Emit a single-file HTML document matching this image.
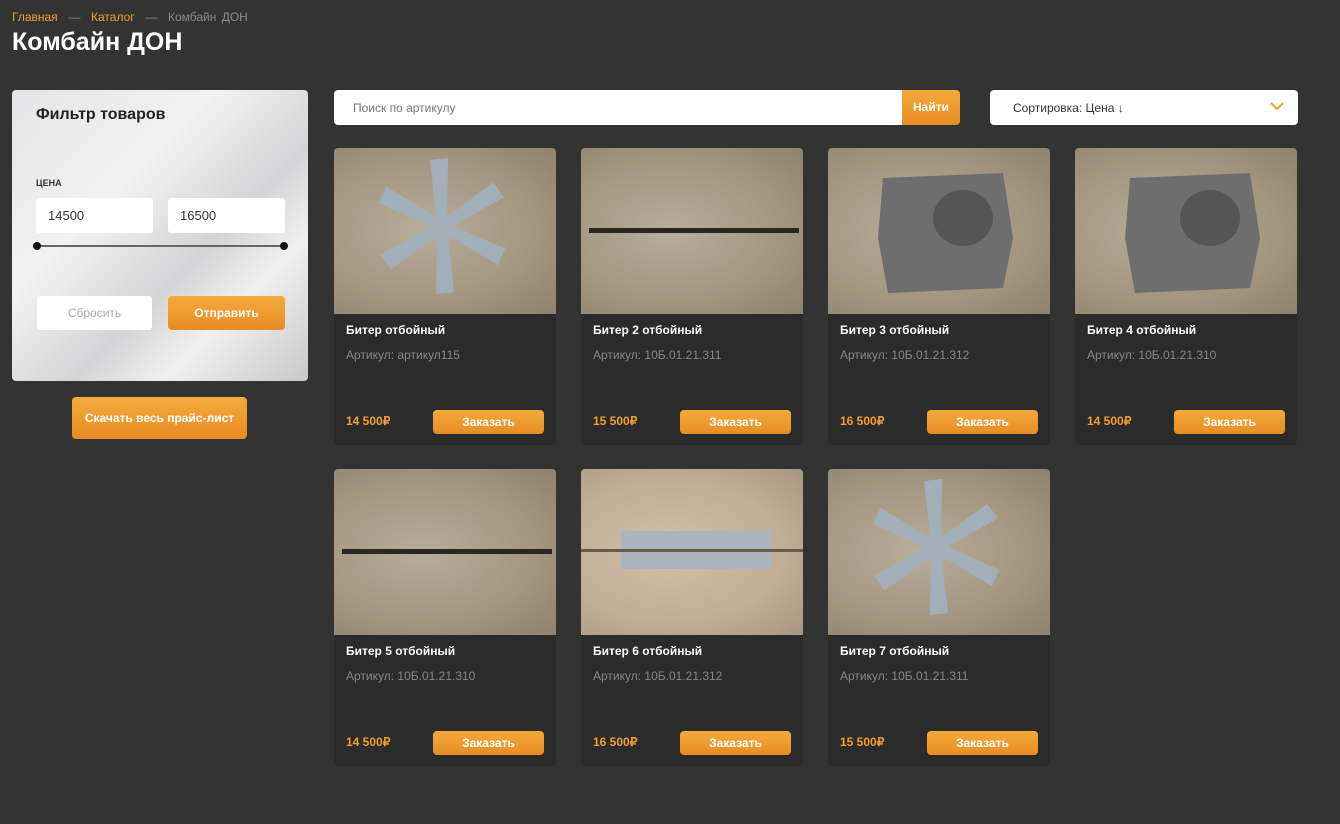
<!DOCTYPE html>
<html><head><meta charset="utf-8"><style>
*{box-sizing:border-box;margin:0;padding:0}
body{width:1340px;height:824px;background:#333333;font-family:"Liberation Sans",sans-serif;position:relative;overflow:hidden;color:#fff}
.a{position:absolute}
.bc{left:12px;top:10px;font-size:12px;color:#8a8a8a;word-spacing:2px}
.bc span{color:#f0a030}
h1{position:absolute;left:12px;top:28px;font-size:25px;font-weight:bold;color:#fff}
.filter{left:12px;top:90px;width:296px;height:291px;border-radius:4px;background:linear-gradient(135deg,#e4e4e6 0%,#f2f2f3 35%,#d4d4d6 60%,#f0f0f1 75%,#c8c8ca 100%)}
.inp{background:#fff;border-radius:3px;height:35px;font-size:13px;color:#333;padding:10px 12px}
.btn{background:linear-gradient(#f4aa3c,#e88c24);border-radius:4px;color:#fff;font-size:12px;font-weight:bold;text-align:center}
.card{width:222px;height:297px;background:#2b2b2b;border-radius:4px;overflow:hidden}
.img{height:166px;background:radial-gradient(ellipse at 40% 50%,#b8ad9c,#a2967f 60%,#8f826d)}
.img svg{display:block}
.t{position:absolute;left:12px;top:175px;font-size:12px;font-weight:bold}
.ar{position:absolute;left:12px;top:200px;font-size:12px;color:#888}
.pr{position:absolute;left:12px;top:266px;font-size:12px;font-weight:bold;color:#f0a030}
.ob{position:absolute;left:99px;top:262px;width:111px;height:24px;line-height:24px}
</style></head><body>
<div class="a bc"><span>Главная</span> &nbsp;— &nbsp;<span>Каталог</span> &nbsp;— &nbsp;Комбайн ДОН</div>
<h1>Комбайн ДОН</h1>
<div class="a filter">
<div class="a" style="left:24px;top:16px;font-size:16px;font-weight:bold;color:#222">Фильтр товаров</div>
<div class="a" style="left:24px;top:88px;font-size:9px;font-weight:bold;color:#333">ЦЕНА</div>
<div class="a inp" style="left:24px;top:108px;width:117px">14500</div>
<div class="a inp" style="left:156px;top:108px;width:117px">16500</div>
<div class="a" style="left:25px;top:155px;width:247px;height:2px;background:#666"></div>
<div class="a" style="left:21px;top:152px;width:8px;height:8px;border-radius:50%;background:#111"></div>
<div class="a" style="left:268px;top:152px;width:8px;height:8px;border-radius:50%;background:#111"></div>
<div class="a inp" style="left:25px;top:206px;width:115px;height:34px;text-align:center;color:#aaa;font-size:12px">Сбросить</div>
<div class="a btn" style="left:156px;top:206px;width:117px;height:34px;line-height:34px">Отправить</div>
</div>
<div class="a btn" style="left:72px;top:397px;width:175px;height:42px;line-height:42px">Скачать весь прайс-лист</div>
<div class="a" style="left:334px;top:90px;width:568px;height:35px;background:#fff;border-radius:4px 0 0 4px;font-size:12px;color:#777;padding:11px 19px">Поиск по артикулу</div>
<div class="a btn" style="left:902px;top:90px;width:58px;height:35px;line-height:35px;border-radius:0 4px 4px 0">Найти</div>
<div class="a" style="left:990px;top:90px;width:308px;height:35px;background:#fff;border-radius:4px;font-size:12px;color:#333;padding:11px 23px">Сортировка: Цена ↓
<svg class="a" style="right:14px;top:12px" width="14" height="9" viewBox="0 0 14 9"><path d="M1 1l6 6 6-6" stroke="#f0a030" stroke-width="2" fill="none"/></svg></div>

<div class="a card" style="left:334px;top:148px"><div class="img"><svg width="222" height="166"><g fill="#a3afb8" transform="translate(108,78)"><g id="f"><path d="M-5 -4 L-12 -66 L6 -68 L5 -4Z"/></g><use href="#f" transform="rotate(60)"/><use href="#f" transform="rotate(120)"/><use href="#f" transform="rotate(180)"/><use href="#f" transform="rotate(240)"/><use href="#f" transform="rotate(300)"/><circle r="13"/></g></svg></div><div class="t">Битер отбойный</div><div class="ar">Артикул: артикул115</div><div class="pr">14 500₽</div><div class="btn ob">Заказать</div></div>
<div class="a card" style="left:581px;top:148px"><div class="img"><svg width="222" height="166"><rect x="8" y="80" width="210" height="5" fill="#2a2622"/></svg></div><div class="t">Битер 2 отбойный</div><div class="ar">Артикул: 10Б.01.21.311</div><div class="pr">15 500₽</div><div class="btn ob">Заказать</div></div>
<div class="a card" style="left:828px;top:148px"><div class="img"><svg width="222" height="166"><path d="M55 30 L175 25 L185 90 L175 140 L60 145 L50 90Z" fill="#6e6e6e"/><ellipse cx="135" cy="70" rx="30" ry="28" fill="#555"/></svg></div><div class="t">Битер 3 отбойный</div><div class="ar">Артикул: 10Б.01.21.312</div><div class="pr">16 500₽</div><div class="btn ob">Заказать</div></div>
<div class="a card" style="left:1075px;top:148px"><div class="img"><svg width="222" height="166"><path d="M55 30 L175 25 L185 90 L175 140 L60 145 L50 90Z" fill="#6e6e6e"/><ellipse cx="135" cy="70" rx="30" ry="28" fill="#555"/></svg></div><div class="t">Битер 4 отбойный</div><div class="ar">Артикул: 10Б.01.21.310</div><div class="pr">14 500₽</div><div class="btn ob">Заказать</div></div>
<div class="a card" style="left:334px;top:469px"><div class="img"><svg width="222" height="166"><rect x="8" y="80" width="210" height="5" fill="#2a2622"/></svg></div><div class="t">Битер 5 отбойный</div><div class="ar">Артикул: 10Б.01.21.310</div><div class="pr">14 500₽</div><div class="btn ob">Заказать</div></div>
<div class="a card" style="left:581px;top:469px"><div class="img" style="background:radial-gradient(ellipse at 40% 50%,#d0c0aa,#bfae96 60%,#a89782)"><svg width="222" height="166"><rect x="40" y="62" width="150" height="38" fill="#a9b6bf"/><rect x="0" y="80" width="222" height="3" fill="#6a5a48"/></svg></div><div class="t">Битер 6 отбойный</div><div class="ar">Артикул: 10Б.01.21.312</div><div class="pr">16 500₽</div><div class="btn ob">Заказать</div></div>
<div class="a card" style="left:828px;top:469px"><div class="img"><svg width="222" height="166"><g fill="#a3afb8" transform="translate(108,78)"><use href="#f"/><use href="#f" transform="rotate(60)"/><use href="#f" transform="rotate(120)"/><use href="#f" transform="rotate(180)"/><use href="#f" transform="rotate(240)"/><use href="#f" transform="rotate(300)"/><circle r="13"/></g></svg></div><div class="t">Битер 7 отбойный</div><div class="ar">Артикул: 10Б.01.21.311</div><div class="pr">15 500₽</div><div class="btn ob">Заказать</div></div>
</body></html>
